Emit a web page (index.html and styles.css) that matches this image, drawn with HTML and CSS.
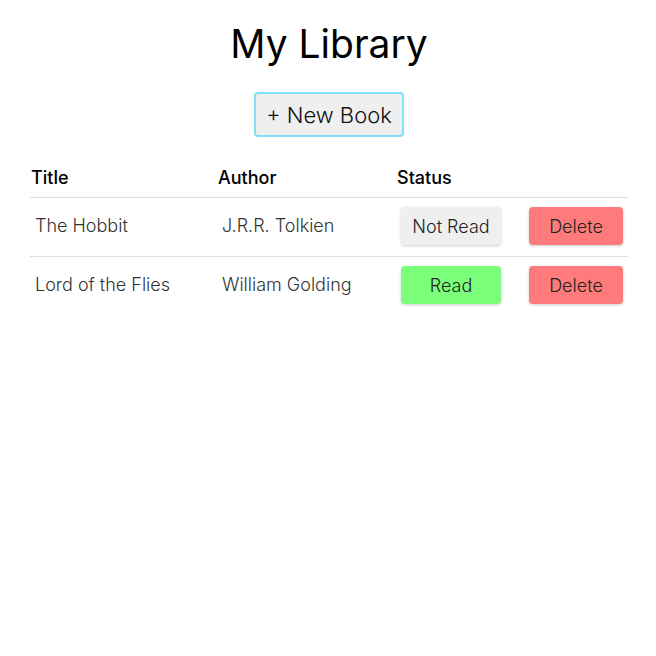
FILE: index.html
```html
<!DOCTYPE html>
<html>
<head>
<meta charset="utf-8">
<link rel="stylesheet" href="styles.css">
</head>
<body>
<main class="page">
  <h1 class="title">My Library</h1>
  <button class="new-book">+ New Book</button>
  <table class="library">
    <thead>
      <tr>
        <th class="col-title">Title</th>
        <th class="col-author">Author</th>
        <th class="col-status">Status</th>
        <th class="col-action"></th>
      </tr>
    </thead>
    <tbody>
      <tr>
        <td>The Hobbit</td>
        <td>J.R.R. Tolkien</td>
        <td><button class="btn status not-read">Not Read</button></td>
        <td class="action"><button class="btn delete">Delete</button></td>
      </tr>
      <tr>
        <td>Lord of the Flies</td>
        <td>William Golding</td>
        <td><button class="btn status read">Read</button></td>
        <td class="action"><button class="btn delete">Delete</button></td>
      </tr>
    </tbody>
  </table>
</main>
</body>
</html>
```
FILE: styles.css
```css
html, body {
  margin: 0;
  padding: 0;
  background: #ffffff;
}
body {
  font-family: Inter, "Open Sans", sans-serif;
  color: #000;
}
.page {
  display: flex;
  flex-direction: column;
  align-items: center;
  padding: 19px 28px 0 30px;
}
.title {
  margin: 0;
  font-size: 39px;
  font-weight: 400;
  line-height: 50px;
}
.new-book {
  margin-top: 23px;
  width: 150px;
  height: 45px;
  border: 2px solid #7fe0f7;
  border-radius: 4px;
  background: #efefef;
  font-family: inherit;
  font-size: 22px;
  font-weight: 300;
  color: #111;
  padding: 0;
  cursor: pointer;
}
.library {
  margin-top: 28px;
  width: 598px;
  border-collapse: collapse;
  font-size: 18px;
}
.library th {
  text-align: left;
  font-weight: 500;
  padding: 2px 1px 8px;
  line-height: 22px;
  border-bottom: 1px solid #dddddd;
}
.col-title { width: 185px; }
.col-author { width: 177px; }
.col-status { width: 121px; }
.library td {
  padding: 9px 5px 11px;
  font-weight: 300;
  color: #333;
  border-bottom: 1px solid #dddddd;
  line-height: 20px;
  height: 38px;
  box-sizing: content-box;
}
.library tbody tr:last-child td {
  border-bottom: none;
}
.library td.action {
  text-align: right;
}
.btn {
  display: inline-block;
  height: 38px;
  border: none;
  border-radius: 4px;
  font-family: inherit;
  font-size: 18px;
  font-weight: 300;
  color: #222;
  box-shadow: 0 1px 3px rgba(0, 0, 0, 0.2);
  vertical-align: top;
  padding: 0;
}
.status { width: 100px; }
.not-read { background: #efefef; }
.read { background: #7bff7b; }
.delete { width: 94px; background: #ff7b7b; }
```
